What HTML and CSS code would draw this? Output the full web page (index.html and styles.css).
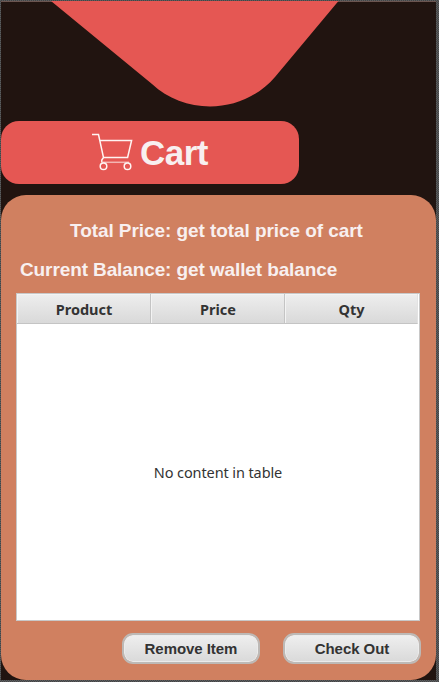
FILE: index.html
```html
<!DOCTYPE html>
<html lang="en">
<head>
<meta charset="utf-8">
<title>Cart</title>
<link rel="stylesheet" href="styles.css">
</head>
<body>
<main class="app">
  <svg class="peak" width="435" height="120" viewBox="1 1 435 120" aria-hidden="true"><path d="M51 1 L152 84 C185 115 242 115 275 77 L338.5 1 Z"/></svg>
  <header class="title">
    <svg class="cart-icon" width="42" height="39" viewBox="0 0 42 39" aria-hidden="true">
      <path d="M0 1.5H6.5L11.5 24.5L9.8 27V29.5M8 7.5H39.6L35.6 24.5H11.5"/>
      <path class="axle" d="M9.8 29.3H37"/>
      <circle cx="11.5" cy="33.3" r="3.3"/><circle cx="35.5" cy="33.3" r="3.3"/>
    </svg>
    <h1>Cart</h1>
  </header>
  <section class="panel">
    <p class="total">Total Price: get total price of cart</p>
    <p class="balance">Current Balance: get wallet balance</p>
    <div class="table">
      <div class="head"><span>Product</span><span>Price</span><span>Qty</span></div>
      <div class="empty">No content in table</div>
    </div>
    <div class="actions"><button>Remove Item</button><button>Check Out</button></div>
  </section>
</main>
</body>
</html>
```
FILE: styles.css
```css
* { box-sizing: border-box; }
body {
  margin: 0;
  height: 682px;
  padding: 1px 2px 2px 1px;
  overflow: hidden;
  background: repeating-conic-gradient(#434445 0 25%, #5c5d5e 0 50%) 0 0 / 2px 2px;
  font-family: "Liberation Sans", Arial, sans-serif;
}
.app {
  width: 435px;
  height: 679px;
  background: #211410;
  border-top: 1px solid #6b5550;
}
.peak { display: block; margin-top: -1px; fill: #e55753; }
.title {
  display: flex;
  align-items: center;
  width: 298px;
  height: 63px;
  padding-left: 91px;
  border-radius: 18px;
  background: #e55753;
  color: #f8f0f0;
}
.cart-icon { fill: none; stroke: #fff4f2; stroke-width: 1.5; }
.axle { stroke: #f3b5b2; }
h1 { margin: 0 0 0 6px; font-size: 35px; line-height: 40px; letter-spacing: -0.5px; }
.panel {
  height: 485px;
  margin-top: 11px;
  padding: 25px 15px 0;
  border-radius: 25px;
  background: #d08060;
  color: #f8f0f0;
}
.panel p {
  margin: 0;
  font-size: 19px;
  font-weight: bold;
  line-height: 22px;
  letter-spacing: -0.07px;
  white-space: nowrap;
}
.panel .total { margin-left: 54px; }
.panel .balance { margin: 17px 0 12px 4px; letter-spacing: -0.11px; }
.table {
  display: flex;
  flex-direction: column;
  width: 404px;
  height: 328px;
  border: 1px solid #c8c8c8;
  background: #fff;
  color: #333;
  font-family: "Noto Sans", sans-serif;
  font-size: 14.5px;
}
.head {
  display: grid;
  grid-template-columns: 134px 134px 133px;
  height: 30px;
  font-weight: bold;
  text-align: center;
}
.head span {
  padding: 2px 0 0 1px;
  line-height: 27px;
  border-right: 1px solid #c4c4c4;
  border-bottom: 1px solid #c4c4c4;
  background: linear-gradient(#eee, #d9d9d9);
  box-shadow: inset 1px 1px #f3f3f3;
}
.head span:last-child { border-right-color: #e2e2e2; }
.empty { display: grid; flex: 1; place-items: center; letter-spacing: -0.1px; }
.actions { display: flex; gap: 23px; margin: 12px 0 0 106px; }
button {
  width: 138px;
  height: 31px;
  padding: 0;
  border: 2px solid #bdb9b6;
  border-radius: 11px;
  background: linear-gradient(#efefef, #d9d9d9) padding-box;
  box-shadow: inset 0 0 0 1px #ebebeb;
  color: #333;
  font: bold 15px/24px "Liberation Sans", Arial, sans-serif;
  letter-spacing: -0.05px;
}
```
